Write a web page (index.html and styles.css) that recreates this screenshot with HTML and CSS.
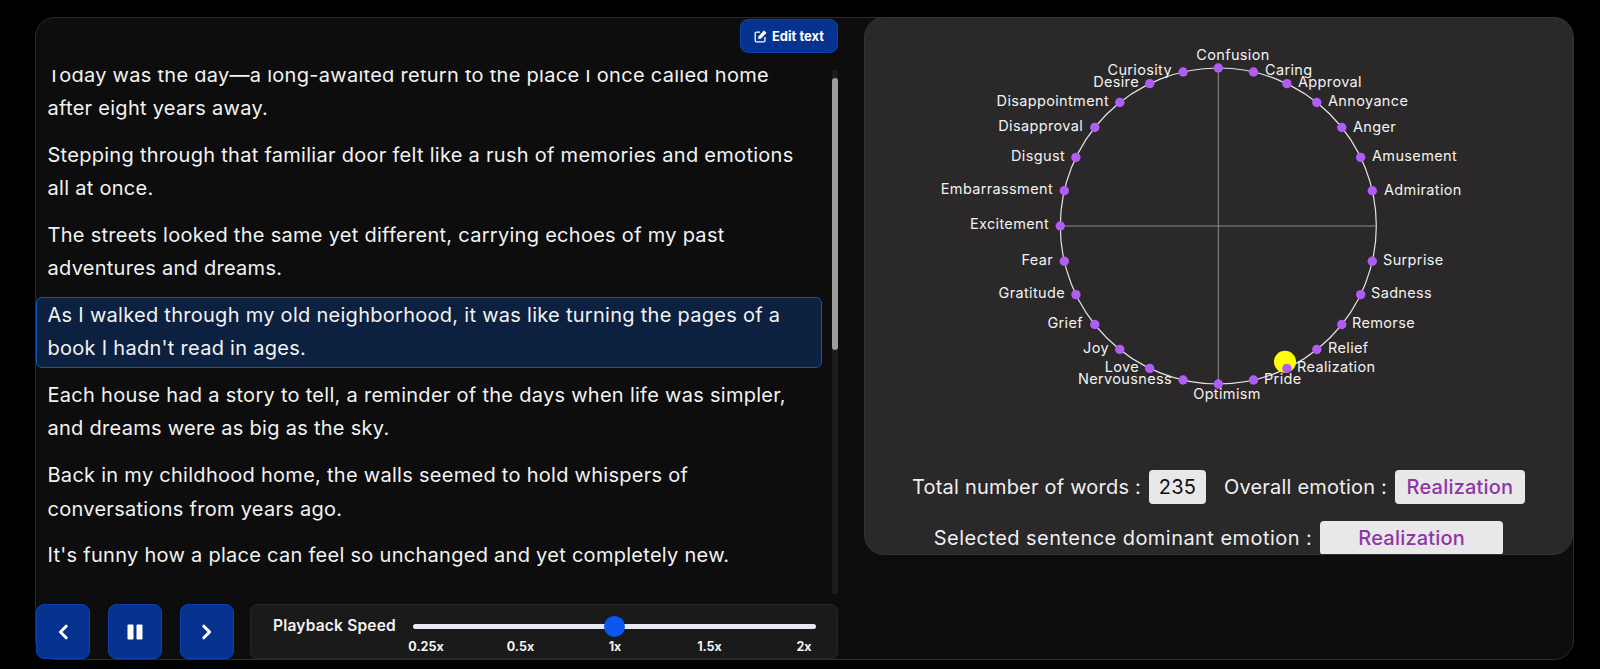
FILE: index.html
```html
<!DOCTYPE html>
<html lang="en">
<head>
    <meta charset="UTF-8">
    <meta name="viewport" content="width=device-width, initial-scale=1.0">
    <title>Emotion Reader</title>
    <link rel="stylesheet" href="styles.css">
</head>
<body>
    <div class="app">
        <div class="reader">
            <div class="reader-top">
                <button class="edit-btn">
                    <svg class="edit-icon" viewBox="0 0 14 14" width="13" height="13">
                        <path d="M6.5 2.2H2.6A1.3 1.3 0 0 0 1.3 3.5v7.9a1.3 1.3 0 0 0 1.3 1.3h7.9a1.3 1.3 0 0 0 1.3-1.3V7.6" fill="none" stroke="#fff" stroke-width="1.4"/>
                        <path d="M11.2.9l1.9 1.9a.6.6 0 0 1 0 .8L7.3 9.4l-2.9.4.4-2.9L10.4.9a.6.6 0 0 1 .8 0z" fill="#fff"/>
                    </svg>
                    Edit text
                </button>
            </div>

            <div class="sentences-wrap">
                <div class="sentences">
                    <p class="sentence first">Today was the day—a long-awaited return to the place I once called home after eight years away.</p>
                    <p class="sentence">Stepping through that familiar door felt like a rush of memories and emotions all at once.</p>
                    <p class="sentence">The streets looked the same yet different, carrying echoes of my past adventures and dreams.</p>
                    <p class="sentence active">As I walked through my old neighborhood, it was like turning the pages of a book I hadn't read in ages.</p>
                    <p class="sentence">Each house had a story to tell, a reminder of the days when life was simpler, and dreams were as big as the sky.</p>
                    <p class="sentence">Back in my childhood home, the walls seemed to hold whispers of conversations from years ago.</p>
                    <p class="sentence">It's funny how a place can feel so unchanged and yet completely new.</p>
                </div>
                <div class="scroll-track"><div class="scroll-thumb"></div></div>
            </div>

            <div class="controls">
                <button class="control-btn">
                    <svg viewBox="0 0 12 16" width="12" height="16"><path d="M9.2 2.2L3.4 8l5.8 5.8" fill="none" stroke="#fff" stroke-width="3" stroke-linecap="round" stroke-linejoin="round"/></svg>
                </button>
                <button class="control-btn">
                    <svg viewBox="0 0 16 16" width="16" height="16"><rect x="0.5" y="0.5" width="6" height="15" rx="1" fill="#fff"/><rect x="9.5" y="0.5" width="6" height="15" rx="1" fill="#fff"/></svg>
                </button>
                <button class="control-btn">
                    <svg viewBox="0 0 12 16" width="12" height="16"><path d="M2.8 2.2L8.6 8l-5.8 5.8" fill="none" stroke="#fff" stroke-width="3" stroke-linecap="round" stroke-linejoin="round"/></svg>
                </button>

                <div class="speed">
                    <div class="speed-label">Playback Speed</div>
                    <div class="speed-slider">
                        <div class="slider-track"><div class="slider-thumb"></div></div>
                        <div class="slider-ticks">
                            <span>0.25x</span>
                            <span>0.5x</span>
                            <span>1x</span>
                            <span>1.5x</span>
                            <span>2x</span>
                        </div>
                    </div>
                </div>
            </div>
        </div>

        <div class="emotions">
            <svg class="wheel" viewBox="0 0 709 440" width="709" height="440">
                <circle class="wheel-ring" cx="354.3" cy="209" r="158"/>
                <line class="wheel-axis" x1="354.3" y1="51" x2="354.3" y2="367"/>
                <line class="wheel-axis" x1="196.3" y1="209" x2="512.3" y2="209"/>

                <circle class="wheel-marker" cx="421" cy="344.7" r="11"/>

                <!-- dots, clockwise from the top -->
                <g class="wheel-dots">
                    <circle cx="354.3" cy="51" r="4.7"/>
                    <circle cx="389.5" cy="55" r="4.7"/>
                    <circle cx="422.9" cy="66.6" r="4.7"/>
                    <circle cx="452.8" cy="85.5" r="4.7"/>
                    <circle cx="477.8" cy="110.5" r="4.7"/>
                    <circle cx="496.7" cy="140.4" r="4.7"/>
                    <circle cx="508.3" cy="173.8" r="4.7"/>
                    <circle cx="508.3" cy="244.2" r="4.7"/>
                    <circle cx="496.7" cy="277.6" r="4.7"/>
                    <circle cx="477.8" cy="307.5" r="4.7"/>
                    <circle cx="452.8" cy="332.5" r="4.7"/>
                    <circle cx="422.9" cy="351.4" r="4.7"/>
                    <circle cx="389.5" cy="363" r="4.7"/>
                    <circle cx="354.3" cy="367" r="4.7"/>
                    <circle cx="319.1" cy="363" r="4.7"/>
                    <circle cx="285.7" cy="351.4" r="4.7"/>
                    <circle cx="255.8" cy="332.5" r="4.7"/>
                    <circle cx="230.8" cy="307.5" r="4.7"/>
                    <circle cx="211.9" cy="277.6" r="4.7"/>
                    <circle cx="200.3" cy="244.2" r="4.7"/>
                    <circle cx="196.3" cy="209" r="4.7"/>
                    <circle cx="200.3" cy="173.8" r="4.7"/>
                    <circle cx="211.9" cy="140.4" r="4.7"/>
                    <circle cx="230.8" cy="110.5" r="4.7"/>
                    <circle cx="255.8" cy="85.5" r="4.7"/>
                    <circle cx="285.7" cy="66.6" r="4.7"/>
                    <circle cx="319.1" cy="55" r="4.7"/>
                </g>

                <!-- labels -->
                <g class="wheel-labels">
                    <text x="369" y="38.5" text-anchor="middle">Confusion</text>
                    <text x="401" y="53">Caring</text>
                    <text x="434" y="65.5">Approval</text>
                    <text x="464" y="84">Annoyance</text>
                    <text x="489" y="110">Anger</text>
                    <text x="508" y="139">Amusement</text>
                    <text x="520" y="173">Admiration</text>
                    <text x="519" y="243">Surprise</text>
                    <text x="507" y="276">Sadness</text>
                    <text x="488" y="306">Remorse</text>
                    <text x="464" y="331">Relief</text>
                    <text x="433" y="350">Realization</text>
                    <text x="400" y="362">Pride</text>
                    <text x="363" y="377" text-anchor="middle">Optimism</text>
                    <text x="308" y="362" text-anchor="end">Nervousness</text>
                    <text x="275" y="350" text-anchor="end">Love</text>
                    <text x="245" y="331" text-anchor="end">Joy</text>
                    <text x="219" y="306" text-anchor="end">Grief</text>
                    <text x="201" y="276" text-anchor="end">Gratitude</text>
                    <text x="189" y="243" text-anchor="end">Fear</text>
                    <text x="185" y="207" text-anchor="end">Excitement</text>
                    <text x="189" y="172" text-anchor="end">Embarrassment</text>
                    <text x="201" y="139" text-anchor="end">Disgust</text>
                    <text x="219" y="109" text-anchor="end">Disapproval</text>
                    <text x="245" y="84" text-anchor="end">Disappointment</text>
                    <text x="275" y="65" text-anchor="end">Desire</text>
                    <text x="308" y="53" text-anchor="end">Curiosity</text>
                </g>
            </svg>

            <div class="stats">
                <div class="stat-row">
                    <span class="stat-label">Total number of words :</span>
                    <span class="stat-box count">235</span>
                    <span class="stat-label overall">Overall emotion :</span>
                    <span class="stat-box emotion">Realization</span>
                </div>
                <div class="stat-row">
                    <span class="stat-label selected">Selected sentence dominant emotion :</span>
                    <span class="stat-box emotion wide">Realization</span>
                </div>
            </div>
        </div>
    </div>
</body>
</html>
```
FILE: styles.css
```css
/* General Styling */
body {
    margin: 0;
    padding: 0;
    overflow: hidden;
    background: #000;
    color: #f2f2f2;
    font-family: Inter, "Noto Sans", sans-serif;
}

.app {
    display: flex;
    gap: 26px;
    box-sizing: border-box;
    width: 1539px;
    height: 643px;
    margin: 17px 0 0 35px;
    background: #0d0d0d;
    border: 1px solid #2b2b2b;
    border-radius: 20px;
}

/* Left column */
.reader {
    width: 802px;
    flex-shrink: 0;
    display: flex;
    flex-direction: column;
}

.reader-top {
    display: flex;
    justify-content: flex-end;
    height: 52px;
    padding-top: 1px;
    box-sizing: border-box;
}

.edit-btn {
    display: flex;
    align-items: center;
    justify-content: center;
    gap: 5px;
    width: 98px;
    height: 34px;
    padding: 0;
    background: #05338f;
    border: 1px solid #0a42ad;
    border-radius: 8px;
    color: #fff;
    font-family: inherit;
    font-size: 13px;
    font-weight: 700;
}

.sentences-wrap {
    display: flex;
    height: 524px;
    justify-content: space-between;
}

.sentences {
    width: 786px;
    overflow: hidden;
}

.sentence {
    margin: 0 0 9.5px;
    padding: 1px 11px 1px 10.5px;
    border: 1px solid transparent;
    font-size: 20px;
    line-height: 33.33px;
    letter-spacing: 0.28px;
}

.sentence.first {
    margin-top: -13.5px;
}

.sentence.active {
    background: #0c2140;
    border-color: #0c57c0;
    border-radius: 6px;
}

.scroll-track {
    width: 6px;
    background: #1c1c1c;
}

.scroll-thumb {
    width: 6px;
    height: 272px;
    margin-top: 8px;
    background: #9c9c9c;
    border-radius: 3px;
}

/* Onscreen Controls */
.controls {
    display: flex;
    margin-top: 10px;
}

.control-btn {
    display: flex;
    align-items: center;
    justify-content: center;
    width: 54px;
    height: 55px;
    margin-right: 18px;
    padding: 0;
    background: #05338f;
    border: 1px solid #0a42ad;
    border-radius: 8px;
}

.speed {
    display: flex;
    flex: 1;
    margin-left: -2px;
    height: 55px;
    box-sizing: border-box;
    background: #1a1a1a;
    border: 1px solid #262626;
    border-radius: 7px;
}

.speed-label {
    width: 135px;
    margin-left: 22px;
    padding-top: 11px;
    font-size: 15.5px;
    font-weight: 600;
    letter-spacing: 0.2px;
    line-height: 20px;
    white-space: nowrap;
}

.speed-slider {
    width: 408px;
}

.slider-track {
    position: relative;
    height: 5px;
    margin: 19px 0 0 5px;
    background: #e9e9f5;
    border-radius: 3px;
}

.slider-thumb {
    position: absolute;
    left: 190.5px;
    top: -8px;
    width: 21px;
    height: 21px;
    background: #0a58f0;
    border-radius: 50%;
}

.slider-ticks {
    display: grid;
    grid-template-columns: repeat(5, 40px);
    justify-content: space-between;
    margin: 10px -8px 0 -2px;
    font-size: 12.5px;
    font-weight: 700;
    line-height: 16px;
    text-align: center;
}

/* Right card */
.emotions {
    width: 709px;
    height: 538px;
    overflow: hidden;
    background: #2a2829;
    border: 1px solid #333;
    border-radius: 20px;
    box-sizing: border-box;
    margin-top: -1px;
    margin-bottom: auto;
}

.wheel {
    display: block;
    height: 440px;
    margin: -1px 0 0 -1px;
}

.wheel-ring {
    fill: none;
    stroke: #e4e4e4;
    stroke-width: 1.2;
}

.wheel-axis {
    stroke: #8c8c8c;
    stroke-width: 1;
}

.wheel-marker {
    fill: #ffff00;
}

.wheel-dots circle {
    fill: #b15cf5;
}

.wheel-labels text {
    fill: #f2f2f2;
    font-size: 14.5px;
    letter-spacing: 0.35px;
    dominant-baseline: central;
    transform: translateY(-1px);
}

.stats {
    display: flex;
    flex-direction: column;
    align-items: center;
    gap: 17px;
    margin-top: 13px;
}

.stat-row {
    display: flex;
    align-items: center;
    gap: 8px;
}

.stat-label {
    font-size: 20px;
    letter-spacing: 0.2px;
    color: #efefef;
}

.stat-label.overall {
    margin-left: 10px;
}

.stat-label.selected {
    letter-spacing: 0.45px;
}

.stat-box {
    display: flex;
    align-items: center;
    justify-content: center;
    height: 34px;
    background: #e8e8e8;
    border-radius: 4px;
    font-size: 20px;
    letter-spacing: 0.2px;
}

.stat-box.count {
    width: 57px;
    color: #111;
}

.stat-box.emotion {
    width: 130px;
    color: #8e35a8;
    font-weight: 500;
}

.stat-box.wide {
    width: 183px;
}
```
